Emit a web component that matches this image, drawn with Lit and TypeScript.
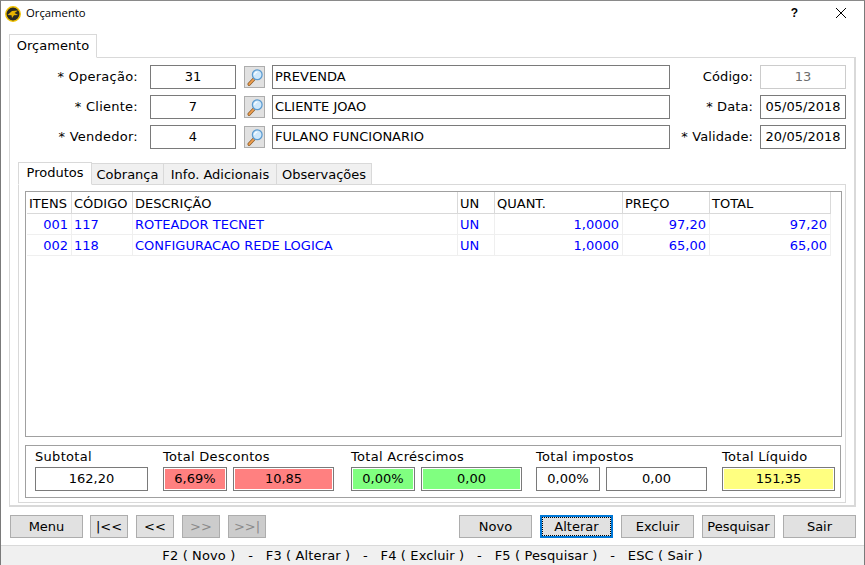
import { LitElement, html, css, svg } from "lit";
import { customElement } from "lit/decorators.js";

const searchIcon = svg`
  <line x1="9" y1="12" x2="3.5" y2="18" stroke="#8a5a28" stroke-width="3.6" stroke-linecap="round" />
  <line x1="9" y1="12" x2="3.5" y2="18" stroke="#f0a050" stroke-width="2" stroke-linecap="round" />
  <circle cx="12.5" cy="7.5" r="5.4" fill="#cfe8fb" stroke="#5b9bd0" stroke-width="1.4" />
  <path d="M9.6 7.5a3 3 0 0 1 3-3" fill="none" stroke="#fff" stroke-width="1.2" />
`;

const logo = svg`
  <circle cx="8" cy="8" r="7.2" fill="#2a2a22" stroke="#f2c200" stroke-width="1.5" />
  <path d="M2.5 9 L7 5 L13 4.5 L9.5 7 L13 9 L9 9.2 L7 12 L6.5 9.3 Z" fill="#e8b400" />
`;

const columns = ["ITENS", "CÓDIGO", "DESCRIÇÃO", "UN", "QUANT.", "PREÇO", "TOTAL"];
const rows = [
  ["001", "117", "ROTEADOR TECNET", "UN", "1,0000", "97,20", "97,20"],
  ["002", "118", "CONFIGURACAO REDE LOGICA", "UN", "1,0000", "65,00", "65,00"],
];
const rightCols = [0, 4, 5, 6];

@customElement("app-root")
export class AppRoot extends LitElement {
  static override styles = css`
    :host {
      display: block;
      width: 865px;
      height: 565px;
      font-family: "DejaVu Sans", sans-serif;
      font-size: 13px;
      color: #000;
    }
    * {
      box-sizing: border-box;
    }
    .window {
      width: 865px;
      height: 565px;
      background: #fff;
      border: 1px solid #7a7a7a;
      border-top-color: #8a8a8a;
      display: flex;
      flex-direction: column;
    }
    .titlebar {
      height: 33px;
      flex: none;
      display: flex;
      align-items: flex-start;
      padding: 5px 13px 0 4px;
      font-family: "Open Sans", sans-serif;
      font-size: 11.3px;
    }
    .titlebar svg {
      margin-right: 5px;
    }
    .titlebar .name {
      flex: 1;
      line-height: 15px;
      margin-top: -1px;
    }
    .help {
      font-family: "Liberation Sans", sans-serif;
      font-weight: bold;
      font-size: 12px;
      line-height: 15px;
      margin-right: 36px;
    }
    .tab-strip {
      display: flex;
      align-items: flex-end;
      margin: 0 0 -1px 8px;
      position: relative;
      height: 24px;
      flex: none;
    }
    .outer-tab {
      width: 88px;
      height: 24px;
      border: 1px solid #d9d9d9;
      border-bottom: 1px solid #fff;
      background: #fff;
      text-align: center;
      line-height: 22px;
    }
    .outer-panel {
      margin-left: 8px;
      width: 847px;
      height: 450px;
      flex: none;
      border: 1px solid #d9d9d9;
      border-right-width: 2px;
      border-bottom-width: 2px;
      padding: 7px 8px 0 8px;
    }
    .form {
      display: grid;
      grid-template-columns: 120px 98px 36px 398px 1fr 86px;
      grid-auto-rows: 24px;
      row-gap: 6px;
      align-items: stretch;
      height: 96px;
    }
    .form label {
      text-align: right;
      line-height: 24px;
      letter-spacing: 0.25px;
    }
    .form .code {
      margin-left: 12px;
    }
    .form .btn-cell {
      margin-left: 8px;
      width: 22px;
    }
    .form-row {
      display: contents;
    }
    .form .side-label {
      padding-right: 7px;
      letter-spacing: 0.1px;
    }
    .field {
      border: 1px solid #7a7a7a;
      background: #fff;
      line-height: 22px;
      white-space: nowrap;
      overflow: hidden;
    }
    .center {
      text-align: center;
    }
    .left {
      text-align: left;
      padding-left: 2px;
    }
    .disabled {
      border-color: #cccccc;
      color: #6d6d6d;
    }
    .search {
      height: 22px;
      margin-top: 1px;
      width: 21px;
      background: #e1e1e1;
      border: 1px solid #adadad;
      display: flex;
      align-items: center;
      justify-content: center;
    }
    .inner-strip {
      display: flex;
      align-items: flex-end;
      height: 23px;
      margin-top: 1px;
      margin-bottom: -1px;
      position: relative;
    }
    .inner-tab {
      height: 22px;
      border: 1px solid #d9d9d9;
      border-left-width: 0;
      background: #f0f0f0;
      text-align: center;
      line-height: 21px;
    }
    .inner-tab.active {
      height: 23px;
      background: #fff;
      border-left-width: 1px;
      border-bottom-color: #fff;
      line-height: 19px;
    }
    .inner-panel {
      height: 319px;
      border: 1px solid #d9d9d9;
      padding: 6px 5px 0 6px;
      display: flex;
      flex-direction: column;
    }
    .grid-box {
      height: 246px;
      width: 817px;
      flex: none;
      border: 1px solid #a0a0a0;
      padding-left: 1px;
    }
    .grid-row {
      display: grid;
      grid-template-columns: 45px 61px 325px 37px 128px 87px 121px;
      width: 804px;
    }
    .head {
      height: 22px;
      border-bottom: 1px solid #d9d9d9;
      line-height: 23px;
    }
    .head span {
      border-right: 1px solid #d9d9d9;
      padding-left: 2px;
      white-space: nowrap;
    }
    .body {
      height: 21px;
      border-bottom: 1px solid #efefef;
      line-height: 21px;
      color: #0000ff;
    }
    .body span {
      border-right: 1px solid #efefef;
      padding: 0 3px 0 2px;
      white-space: nowrap;
    }
    .body .num {
      text-align: right;
    }
    .summary {
      margin-top: 8px;
      height: 53px;
      border: 1px solid #a0a0a0;
      width: 816px;
      flex: none;
      padding: 2px 5px 0 9px;
      display: flex;
    }
    .group {
      display: flex;
      flex-direction: column;
    }
    .group .cap {
      height: 19px;
      line-height: 18px;
      white-space: nowrap;
      letter-spacing: 0.3px;
    }
    .group .vals {
      display: flex;
      gap: 6px;
    }
    .vals .field {
      height: 24px;
      text-align: center;
    }
    .red {
      background: #ff8080;
      box-shadow: inset 0 0 0 1px #fff;
    }
    .green {
      background: #80ff80;
      box-shadow: inset 0 0 0 1px #fff;
    }
    .yellow {
      background: #ffff80;
      box-shadow: inset 0 0 0 1px #fff;
    }
    .w113 {
      width: 113px;
    }
    .w64 {
      width: 64px;
    }
    .w101 {
      width: 101px;
    }
    .g1 {
      width: 128px;
    }
    .g2 {
      width: 188px;
    }
    .g3 {
      width: 185px;
    }
    .g4 {
      width: 186px;
    }
    .actions {
      flex: none;
      height: 23px;
      margin: 8px 8px 0 9px;
      display: flex;
      justify-content: space-between;
    }
    .btn-group {
      display: flex;
      gap: 8px;
    }
    .btn-group .first {
      margin-right: -1px;
    }
    .btn {
      height: 23px;
      background: #e1e1e1;
      border: 1px solid #adadad;
      text-align: center;
      line-height: 21px;
    }
    .wide {
      width: 73px;
    }
    .narrow {
      width: 38px;
    }
    .off {
      background: #cccccc;
      color: #8a8a8a;
    }
    .focus {
      border: 2px solid #0078d7;
      line-height: 19px;
      position: relative;
    }
    .focus::after {
      content: "";
      position: absolute;
      inset: 0;
      border: 1px dotted #000;
    }
    .status {
      margin-top: 7px;
      flex: 1;
      background: #f0f0f0;
      border-top: 1px solid #d9d9d9;
      text-align: center;
      line-height: 20px;
      white-space: pre;
      letter-spacing: 0.13px;
    }
  `;

  private renderRow(label: string, code: string, desc: string, sideLabel: string, side: string, disabled = false) {
    return html`
      <div class="form-row">
        <label>${label}</label>
        <div class="field center code">${code}</div>
        <div class="btn-cell">
          <div class="search"><svg width="18" height="20" viewBox="0 0 20 20">${searchIcon}</svg></div>
        </div>
        <div class="field left">${desc}</div>
        <label class="side-label">${sideLabel}</label>
        <div class="field center ${disabled ? "disabled" : ""}">${side}</div>
      </div>
    `;
  }

  override render() {
    return html`
      <div class="window">
        <div class="titlebar">
          <svg width="16" height="16" viewBox="0 0 16 16">${logo}</svg>
          <span class="name">Orçamento</span>
          <span class="help">?</span>
          <svg width="12" height="15" viewBox="0 0 12 15"><path d="M2 2l10 10M12 2L2 12" stroke="#000" fill="none" /></svg>
        </div>
        <div class="tab-strip"><div class="outer-tab">Orçamento</div></div>
        <div class="outer-panel">
          <div class="form">
            ${this.renderRow("* Operação:", "31", "PREVENDA", "Código:", "13", true)}
            ${this.renderRow("* Cliente:", "7", "CLIENTE JOAO", "* Data:", "05/05/2018")}
            ${this.renderRow("* Vendedor:", "4", "FULANO FUNCIONARIO", "* Validade:", "20/05/2018")}
          </div>
          <div class="inner-strip">
            <div class="inner-tab active" style="width:74px">Produtos</div>
            <div class="inner-tab" style="width:72px">Cobrança</div>
            <div class="inner-tab" style="width:113px">Info. Adicionais</div>
            <div class="inner-tab" style="width:95px">Observações</div>
          </div>
          <div class="inner-panel">
            <div class="grid-box">
              <div class="grid-row head">${columns.map((c) => html`<span>${c}</span>`)}</div>
              ${rows.map(
                (r) => html`<div class="grid-row body">
                  ${r.map((v, i) => html`<span class=${rightCols.includes(i) ? "num" : ""}>${v}</span>`)}
                </div>`
              )}
            </div>
            <div class="summary">
              <div class="group g1">
                <div class="cap">Subtotal</div>
                <div class="vals"><div class="field w113">162,20</div></div>
              </div>
              <div class="group g2">
                <div class="cap">Total Descontos</div>
                <div class="vals"><div class="field w64 red">6,69%</div><div class="field w101 red">10,85</div></div>
              </div>
              <div class="group g3">
                <div class="cap">Total Acréscimos</div>
                <div class="vals"><div class="field w64 green">0,00%</div><div class="field w101 green">0,00</div></div>
              </div>
              <div class="group g4">
                <div class="cap">Total impostos</div>
                <div class="vals"><div class="field w64">0,00%</div><div class="field w101">0,00</div></div>
              </div>
              <div class="group">
                <div class="cap">Total Líquido</div>
                <div class="vals"><div class="field w113 yellow">151,35</div></div>
              </div>
            </div>
          </div>
        </div>
        <div class="actions">
          <div class="btn-group">
            <div class="btn wide first">Menu</div>
            <div class="btn narrow">|&lt;&lt;</div>
            <div class="btn narrow">&lt;&lt;</div>
            <div class="btn narrow off">&gt;&gt;</div>
            <div class="btn narrow off">&gt;&gt;|</div>
          </div>
          <div class="btn-group">
            <div class="btn wide">Novo</div>
            <div class="btn wide focus">Alterar</div>
            <div class="btn wide">Excluir</div>
            <div class="btn wide">Pesquisar</div>
            <div class="btn wide">Sair</div>
          </div>
        </div>
        <div class="status">F2 ( Novo )   -   F3 ( Alterar )   -   F4 ( Excluir )   -   F5 ( Pesquisar )   -   ESC ( Sair )</div>
      </div>
    `;
  }
}
